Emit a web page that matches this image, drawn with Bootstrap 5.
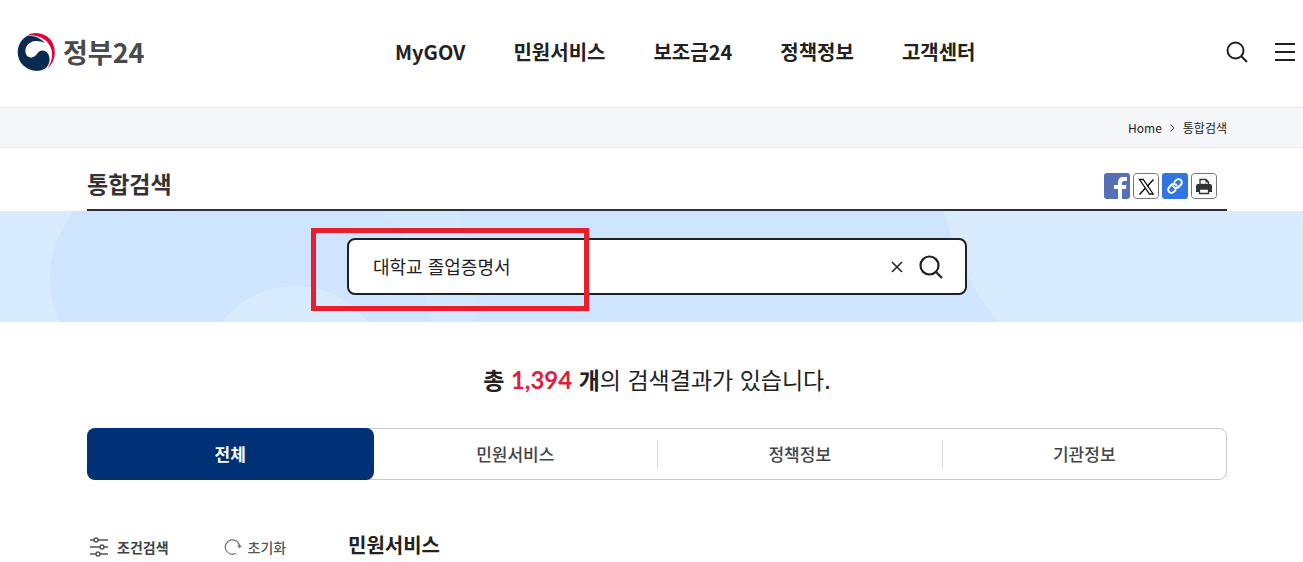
<!DOCTYPE html>
<html lang="ko">
<head>
<meta charset="utf-8">
<meta name="viewport" content="width=device-width, initial-scale=1">
<title>통합검색 | 정부24</title>
<link href="https://cdn.jsdelivr.net/npm/bootstrap@5.3.0/dist/css/bootstrap.min.css" rel="stylesheet">
<style>
body { font-family: "Noto Sans CJK KR", sans-serif; color: #222; background: #fff; line-height: 24px; }
a { color: inherit; text-decoration: none; }
svg { display: block; }
.site-header { height: 108px; padding: 0 8px 4px 17px; border-bottom: 1px solid #e3e4e8; }
.brand { font-size: 27px; font-weight: 700; color: #4a4a4c; gap: 8px; }
.main-menu { gap: 48px; font-size: 20px; font-weight: 700; }
.tools { gap: 27px; }
.plain { padding: 0; border: 0; background: none; color: #1e2124; }
.inset { padding-left: 87px; padding-right: 76px; }
.crumbs { height: 40px; font-size: 12px; background: #f6f7fb; border-bottom: 1px solid #e3e5ea; }
.title-row { height: 63px; border-bottom: 2px solid #2e3036; padding: 0 10px 0 0; }
.title-row h1 { font-size: 23px; font-weight: 700; line-height: 36px; color: #333; margin: 8px 0 0; }
.share { gap: 3px; padding-top: 15px; }
.share-btn { width: 26px; height: 26px; border-radius: 3px; overflow: hidden; }
.banner { height: 111px; background: #d9ebff; }
.banner-art { position: absolute; inset: 0; width: 100%; height: 100%; }
.search-box { width: 620px; max-width: 100%; height: 57px; border: 2px solid #1e2124; border-radius: 8px; background: #fff; padding: 0 22px 0 24px; }
.search-box input { border: 0; outline: 0; background: none; font-size: 18px; color: #1e2124; padding: 0 0 2px; min-width: 0; }
.marker { position: absolute; left: -38px; top: -12px; width: 278px; height: 83px; border: 5px solid #e81e28; pointer-events: none; }
.summary { font-size: 23px; line-height: 36px; margin: 39px 0 30px; }
.summary .num { font-family: Lato, sans-serif; font-size: 24px; color: #e01e3c; }
.tabs { height: 52px; border: 1px solid #c8c8c8; border-radius: 8px; font-size: 17px; font-weight: 500; color: #444; }
.tabs a { flex: 1 1 0; height: 28px; display: flex; align-items: center; justify-content: center; }
.tabs a + a + a { border-left: 1px solid #d8d8d8; }
.tabs a.current { flex-grow: 1; flex-basis: 3px; height: 52px; margin: -1px 0 -1px -1px; background: #003075; color: #fff; font-weight: 700; border-radius: 8px; }
.lower { margin-top: 50px; }
.side { width: 261px; font-size: 14px; padding: 4px 0 0 2px; gap: 55px; color: #444; }
.side button { font-size: 14px; line-height: 24px; gap: 8px; color: #444; }
.side .reset { color: #555; font-weight: 500; gap: 6px; }
.lower h2 { font-size: 20px; line-height: 30px; font-weight: 700; margin: 0; color: #222; }
</style>
</head>
<body>
<header class="site-header d-flex align-items-center justify-content-between">
  <a href="#" class="brand d-flex align-items-center">
    <svg width="38" height="38" viewBox="0 0 110 110" aria-hidden="true">
      <path fill="#e4003a" d="M30 7C55-8 90 4 102 27C116 55 109 85 88 103C108 73 104 45 88 27C74 11 50 5 30 7Z"/>
      <path fill="#0b2a52" d="M30 8A54 54 0 0 0 50 109C68 111 84 106 91 91C100 73 90 51 74 51C57 51 58 71 42 71C27 71 20 55 27 40C36 22 60 18 81 29C69 13 46 6 30 8Z"/>
    </svg>
    <span>정부24</span>
  </a>
  <nav class="main-menu d-flex" aria-label="주 메뉴">
    <a href="#">MyGOV</a><a href="#">민원서비스</a><a href="#">보조금24</a><a href="#">정책정보</a><a href="#">고객센터</a>
  </nav>
  <div class="tools d-flex align-items-center">
    <button type="button" class="plain" aria-label="검색">
      <svg width="22" height="22" viewBox="0 0 22 22" fill="none" stroke="currentColor" stroke-width="2"><circle cx="9.500" cy="9.500" r="8"/><path d="M15.300 15.300L21 21"/></svg>
    </button>
    <button type="button" class="plain" aria-label="전체 메뉴">
      <svg width="20" height="20" viewBox="0 0 20 20" fill="currentColor"><path d="M0 1h20v2H0zM0 9h20v2H0zM0 17h20v2H0z"/></svg>
    </button>
  </div>
</header>
<nav class="crumbs inset d-flex align-items-center justify-content-end" aria-label="현재 위치">
  <a href="#">Home</a>
  <svg class="mx-2" width="5" height="8" viewBox="0 0 5 8" fill="none" stroke="#333"><path d="M.5.5L4 4L.5 7.500"/></svg>
  <span>통합검색</span>
</nav>
<main>
  <div class="inset">
    <div class="title-row d-flex align-items-center justify-content-between">
      <h1>통합검색</h1>
      <div class="share d-flex">
        <button type="button" class="plain share-btn" aria-label="페이스북 공유">
          <svg width="26" height="26" viewBox="0 0 26 26"><path fill="#5570b4" d="M0 0h26v26H0z"/><path fill="#fff" d="M14 26V16h-4v-4h4V9.500C14 6 16 4 19 4h4v4h-2.500c-1.500 0-2.500.5-2.500 2V12h4.500l-.7 4H18v10z"/></svg>
        </button>
        <button type="button" class="plain share-btn" aria-label="X 공유">
          <svg width="26" height="26" viewBox="0 0 26 26" fill="none" stroke="#111"><rect x=".5" y=".5" width="25" height="25" rx="3" fill="#fff" stroke="#777"/><path d="M6.500 6.500h3.700l10 14.500h-3.700z" stroke-width="1.300"/><path d="M20.500 6.500l-6.300 6.700M12.500 15L6.500 21.500" stroke-width="1.500"/></svg>
        </button>
        <button type="button" class="plain share-btn" aria-label="주소 복사">
          <svg width="26" height="26" viewBox="0 0 26 26" fill="none"><path fill="#2f74e0" d="M0 0h26v26H0z"/><g stroke="#fff" stroke-width="2" stroke-linecap="round" transform="translate(13 13) rotate(-45)"><path d="M-2.500 3.300H-5a3.300 3.300 0 0 1 0-6.600h3.500A3.300 3.300 0 0 1 1.500 1"/><path d="M2.500-3.300H5a3.300 3.300 0 0 1 0 6.600H1.500A3.300 3.300 0 0 1-1.500-1"/></g></svg>
        </button>
        <button type="button" class="plain share-btn" aria-label="인쇄">
          <svg width="26" height="26" viewBox="0 0 26 26"><rect x=".5" y=".5" width="25" height="25" rx="3" fill="#fff" stroke="#777"/><path fill="#333" d="M7 11h12q2 0 2 2v6H5v-6q0-2 2-2z"/><path fill="#fff" stroke="#333" stroke-width="1.300" d="M9 11.500V6.500h6l2.500 2.500v2.500zM8.500 16h9v4.500h-9z"/><path fill="#333" d="M14.500 6v3.500H18z"/></svg>
        </button>
      </div>
    </div>
  </div>
  <section class="banner inset position-relative d-flex align-items-center justify-content-center">
    <svg class="banner-art" viewBox="0 0 1303 111" preserveAspectRatio="xMidYMid slice" aria-hidden="true">
      <path fill="#cfe5ff" d="M73 0Q50 32 50 66Q50 90 60 111H998Q957 60 945 0Z"/>
      <path fill="#d9ebff" opacity=".4" d="M383 0Q426 48 429 111H475Q478 54 457 0ZM62 0H73Q50 32 50 66Q48 35 62 0Z"/>
      <circle cx="295" cy="167" r="92" fill="#d9ebff"/>
    </svg>
    <form class="search-box position-relative d-flex align-items-center" role="search" onsubmit="return false">
      <input class="flex-grow-1" type="text" value="대학교 졸업증명서" aria-label="검색어">
      <button type="reset" class="plain me-3" aria-label="지우기">
        <svg width="12" height="12" viewBox="0 0 12 12" fill="none" stroke="currentColor" stroke-width="1.500"><path d="M1 1l10 10M11 1L1 11"/></svg>
      </button>
      <button class="plain" aria-label="검색">
        <svg width="24" height="24" viewBox="0 0 24 24" fill="none" stroke="currentColor" stroke-width="2.200"><circle cx="10.500" cy="10.500" r="9"/><path d="M17 17l6 6"/></svg>
      </button>
      <span class="marker"></span>
    </form>
  </section>
  <div class="inset">
    <p class="summary text-center"><strong>총 <span class="num">1,394</span> 개</strong>의 검색결과가 있습니다.</p>
    <nav class="tabs d-flex align-items-center" aria-label="검색 분류">
      <a href="#" class="current" aria-current="page">전체</a><a href="#">민원서비스</a><a href="#">정책정보</a><a href="#">기관정보</a>
    </nav>
    <div class="lower d-flex">
      <div class="side d-flex align-items-center">
        <button type="button" class="plain d-flex align-items-center fw-bold">
          <svg width="20" height="20" viewBox="0 0 20 20" fill="#fff" stroke="#555" stroke-width="1.500"><path d="M1 3h18M1 10h18M1 17h18"/><circle cx="7" cy="3" r="2"/><circle cx="13" cy="10" r="2"/><circle cx="9" cy="17" r="2"/></svg>
          조건검색
        </button>
        <button type="button" class="plain reset d-flex align-items-center">
          <svg width="18" height="18" viewBox="0 0 18 18" fill="none" stroke="#777" stroke-width="1.300"><path d="M12 15.300A7.200 7.200 0 1 1 15.700 9"/><path d="M13 7.500h5L15.500 10.500z" fill="#777" stroke="none"/></svg>
          초기화
        </button>
      </div>
      <h2>민원서비스</h2>
    </div>
  </div>
</main>
<script src="https://cdn.jsdelivr.net/npm/bootstrap@5.3.0/dist/js/bootstrap.bundle.min.js"></script>
</body>
</html>
